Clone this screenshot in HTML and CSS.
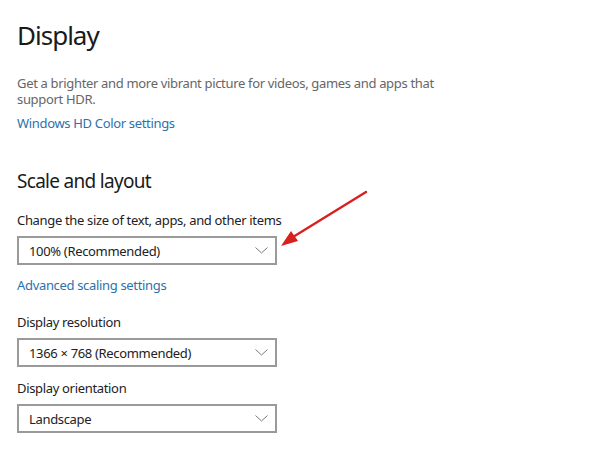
FILE: index.html
```html
<!DOCTYPE html>
<html lang="en">
<head>
    <meta charset="UTF-8">
    <meta name="viewport" content="width=device-width, initial-scale=1.0">
    <title>Display</title>
    <link rel="stylesheet" href="styles.css">
</head>
<body>
    <div class="page">
        <h1 class="title">Display</h1>
        <p class="desc">Get a brighter and more vibrant picture for videos, games and apps that support HDR.</p>
        <a class="link link-hdr" href="#">Windows HD Color settings</a>

        <h2 class="section">Scale and layout</h2>
        <div class="label label-first">Change the size of text, apps, and other items</div>
        <div class="select-wrap">
            <div class="select">
                <span>100% (Recommended)</span>
                <svg class="chevron" width="13" height="7" viewBox="0 0 13 7"><path d="M0.5 0.5 L6.5 6 L12.5 0.5" fill="none" stroke="#7a7a7a" stroke-width="1"/></svg>
            </div>
            <!-- red annotation arrow -->
            <svg class="arrow" width="100" height="66" viewBox="0 0 100 66">
                <line x1="95" y1="2" x2="22" y2="47" stroke="#d8211f" stroke-width="2.4" stroke-linecap="round"/>
                <polygon points="10,56 20,41 27,51" fill="#d8211f"/>
            </svg>
        </div>
        <a class="link link-adv" href="#">Advanced scaling settings</a>

        <div class="label label-res">Display resolution</div>
        <div class="select">
            <span>1366 × 768 (Recommended)</span>
            <svg class="chevron" width="13" height="7" viewBox="0 0 13 7"><path d="M0.5 0.5 L6.5 6 L12.5 0.5" fill="none" stroke="#7a7a7a" stroke-width="1"/></svg>
        </div>

        <div class="label label-ori">Display orientation</div>
        <div class="select">
            <span>Landscape</span>
            <svg class="chevron" width="13" height="7" viewBox="0 0 13 7"><path d="M0.5 0.5 L6.5 6 L12.5 0.5" fill="none" stroke="#7a7a7a" stroke-width="1"/></svg>
        </div>
    </div>
</body>
</html>
```

FILE: styles.css
```css
body {
    margin: 0;
    background-color: #fff;
    font-family: "Noto Sans", "Open Sans", sans-serif;
    color: #1f1f1f;
    letter-spacing: -0.33px;
}
.page {
    padding: 18px 0 0 17px;
}
.title {
    margin: 0;
    font-size: 26px;
    line-height: 34px;
    font-weight: 400;
    letter-spacing: -1px;
    color: #1a1a1a;
}
.desc {
    margin: 23px 0 0 0;
    width: 440px;
    font-size: 13px;
    line-height: 16px;
    color: #666;
}
.link {
    display: block;
    width: max-content;
    font-size: 13px;
    line-height: 16px;
    color: #2b72ad;
    text-decoration: none;
}
.link-hdr {
    margin-top: 8px;
}
.section {
    margin: 37px 0 0 0;
    font-size: 19px;
    line-height: 26px;
    font-weight: 400;
    letter-spacing: -0.7px;
    color: #1a1a1a;
}
.label {
    font-size: 13px;
    line-height: 16px;
    color: #222;
    margin-bottom: 8px;
}
.label-first {
    margin-top: 18px;
}
.link-adv {
    margin-top: 12px;
}
.label-res {
    margin-top: 21px;
}
.label-ori {
    margin-top: 13px;
}
.select-wrap {
    position: relative;
    width: 260px;
}
.select {
    box-sizing: border-box;
    width: 260px;
    height: 29px;
    border: 2px solid #9a9a9a;
    display: flex;
    align-items: center;
    justify-content: space-between;
    padding: 0 7px 0 10px;
    font-size: 13px;
    line-height: 16px;
    color: #222;
}
.chevron {
    display: block;
}
.arrow {
    position: absolute;
    left: 254px;
    top: -46px;
}
```
